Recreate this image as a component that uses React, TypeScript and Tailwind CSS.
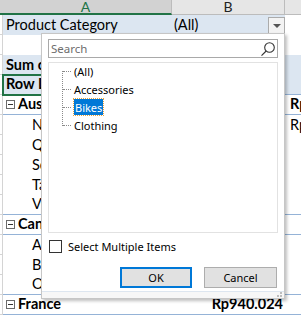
import React from "react";

function Minus() {
  return (
    <span className="inline-flex items-center justify-center w-[9px] h-[9px] border border-[#6b6b6b] mr-[3px] bg-white">
      <span className="block w-[5px] h-[1px] bg-[#333]" />
    </span>
  );
}

function Row({
  children,
  b,
  c,
  cBold,
  bg = "",
  cbg = "",
  borderB = "",
  bBold,
}: {
  children?: React.ReactNode;
  b?: React.ReactNode;
  c?: React.ReactNode;
  cBold?: boolean;
  bg?: string;
  cbg?: string;
  borderB?: string;
  bBold?: boolean;
}) {
  return (
    <div className="flex h-[20px]">
      <div className="w-[3px] border-r border-b border-[#d4d4d4]" />
      <div className={`w-[169px] flex items-center pl-[3px] whitespace-nowrap overflow-hidden ${bg} ${borderB}`}>{children}</div>
      <div className={`w-[113px] flex items-center justify-end pr-[2px] whitespace-nowrap ${bg} ${borderB} ${bBold ? "font-bold" : ""}`}>{b}</div>
      <div className={`flex-1 flex items-center pl-[5px] whitespace-nowrap overflow-hidden ${cbg} ${borderB} ${cBold ? "font-bold" : ""}`}>{c}</div>
    </div>
  );
}

export default function App() {
  const blueLine = "border-b border-[#95b3d7]";
  return (
    <div className="relative w-[301px] h-[321px] overflow-hidden bg-white text-[14.5px] text-black font-['Lato',sans-serif] leading-none">
      {/* column headers */}
      <div className="flex h-[15px] text-[14px]">
        <div className="w-[172px] bg-[#d2d2d2] border-b-2 border-[#217346] border-r border-r-[#bcbcbc] flex items-center justify-center text-[#217346]">
          A
        </div>
        <div className="w-[113px] bg-[#e6e6e6] border-b border-[#bcbcbc] border-r border-r-[#bcbcbc] flex items-center justify-center text-[#222]">
          B
        </div>
        <div className="flex-1 bg-[#e6e6e6] border-b border-[#bcbcbc]" />
      </div>
      {/* row 1 */}
      <div className="flex h-[20px]">
        <div className="w-[3px] border-r border-b border-[#d4d4d4]" />
        <div className="w-[169px] bg-[#dce6f1] flex items-center pl-[3px]">Product Category</div>
        <div className="w-[113px] bg-[#dce6f1] flex items-center pl-[2px]">(All)</div>
        <div className="flex-1" />
      </div>
      <Row />
      <Row bg="bg-[#dce6f1]" cbg="bg-[#dce6f1]">
        <span className="font-bold">Sum of Sales</span>
      </Row>
      <Row bg="bg-[#dce6f1]" cbg="bg-[#dce6f1]" borderB={blueLine}>
        <span className="font-bold">Row Labels</span>
      </Row>
      <Row borderB={blueLine} c="Rp" cBold>
        <Minus />
        <span className="font-bold">Australia</span>
      </Row>
      <Row c="Rp">
        <span className="pl-[26px]">New South Wales</span>
      </Row>
      <Row>
        <span className="pl-[26px]">Queensland</span>
      </Row>
      <Row>
        <span className="pl-[26px]">South Australia</span>
      </Row>
      <Row>
        <span className="pl-[26px]">Tasmania</span>
      </Row>
      <Row borderB={blueLine}>
        <span className="pl-[26px]">Victoria</span>
      </Row>
      <Row borderB={blueLine}>
        <Minus />
        <span className="font-bold">Canada</span>
      </Row>
      <Row>
        <span className="pl-[26px]">Alberta</span>
      </Row>
      <Row>
        <span className="pl-[26px]">British Columbia</span>
      </Row>
      <Row borderB={blueLine}>
        <span className="pl-[26px]">Ontario</span>
      </Row>
      <Row borderB={blueLine} b="Rp940.024" bBold>
        <Minus />
        <span className="font-bold">France</span>
      </Row>

      {/* active cell border for Row Labels */}
      <div className="absolute left-[2px] top-[74px] w-[44px] h-[22px] border-2 border-[#217346] pointer-events-none" />

      {/* dropdown button */}
      <div className="absolute left-[268px] top-[17px] w-[17px] h-[17px] border border-[#ababab] bg-[#f3f3f3] flex items-center justify-center">
        <span className="block w-0 h-0 border-l-[4px] border-r-[4px] border-t-[4px] border-l-transparent border-r-transparent border-t-[#555]" />
      </div>

      {/* filter panel */}
      <div className="absolute left-[41px] top-[33px] w-[244px] h-[266px] bg-white border border-[#c6c6c6] shadow-[2px_2px_3px_rgba(0,0,0,0.25)] font-['Noto_Sans',sans-serif] text-[11px] flex flex-col">
        <div className="px-[6px] pt-[5px]">
          <div className="h-[19px] border border-[#a9a9a9] flex items-center justify-between pl-[2px] pr-[1px] text-[11.5px]">
            <span className="text-[#6d6d6d]">Search</span>
            <svg width="16" height="16" viewBox="0 0 16 16" fill="none" stroke="#333" strokeWidth="1.1">
              <circle cx="9.5" cy="6.5" r="4.8" />
              <path d="M6.2 10 L1.5 14.7" />
            </svg>
          </div>
          <div className="mt-[4px] h-[171px] border border-[#e2e2e2] relative">
            <div className="absolute left-[13px] top-[8px] h-[55px] border-l border-dotted border-[#8a8a8a]" />
            {[8, 26, 44, 62].map((t) => (
              <div key={t} className="absolute left-[14px] w-[8px] border-t border-dotted border-[#8a8a8a]" style={{ top: t }} />
            ))}
            <div className="absolute left-[24px] top-[-1px] flex flex-col">
              <div className="h-[18px] flex items-center px-[1px]">(All)</div>
              <div className="h-[18px] flex items-center px-[1px]">Accessories</div>
              <div className="h-[18px] flex items-center px-[1px]">
                <span className="bg-[#0078d7] text-white outline-1 outline-dotted outline-[#e8a33d] px-[1px] h-[16px] flex items-center">Bikes</span>
              </div>
              <div className="h-[18px] flex items-center px-[1px]">Clothing</div>
            </div>
          </div>
          <div className="mt-[7px] flex items-center gap-[6px] pl-[1px]">
            <span className="w-[13px] h-[13px] border border-[#333] bg-white" />
            <span>Select Multiple Items</span>
          </div>
          <div className="mt-[14px] flex justify-end gap-[12px] pr-[1px]">
            <button className="w-[72px] h-[21px] border-2 border-[#0078d7] bg-[#e1e1e1] flex items-center justify-center">OK</button>
            <button className="w-[73px] h-[21px] border border-[#adadad] bg-[#e1e1e1] flex items-center justify-center">Cancel</button>
          </div>
        </div>
        <div className="mt-auto h-[7px] border-t border-[#dde6f0] bg-[#f7f7f7] relative">
          <div className="absolute right-[2px] bottom-[1px] grid grid-cols-3 gap-[1px]">
            <span className="w-[2px] h-[2px]" />
            <span className="w-[2px] h-[2px]" />
            <span className="w-[2px] h-[2px] bg-[#bdbdbd]" />
            <span className="w-[2px] h-[2px]" />
            <span className="w-[2px] h-[2px] bg-[#bdbdbd]" />
            <span className="w-[2px] h-[2px] bg-[#bdbdbd]" />
          </div>
        </div>
      </div>
    </div>
  );
}
